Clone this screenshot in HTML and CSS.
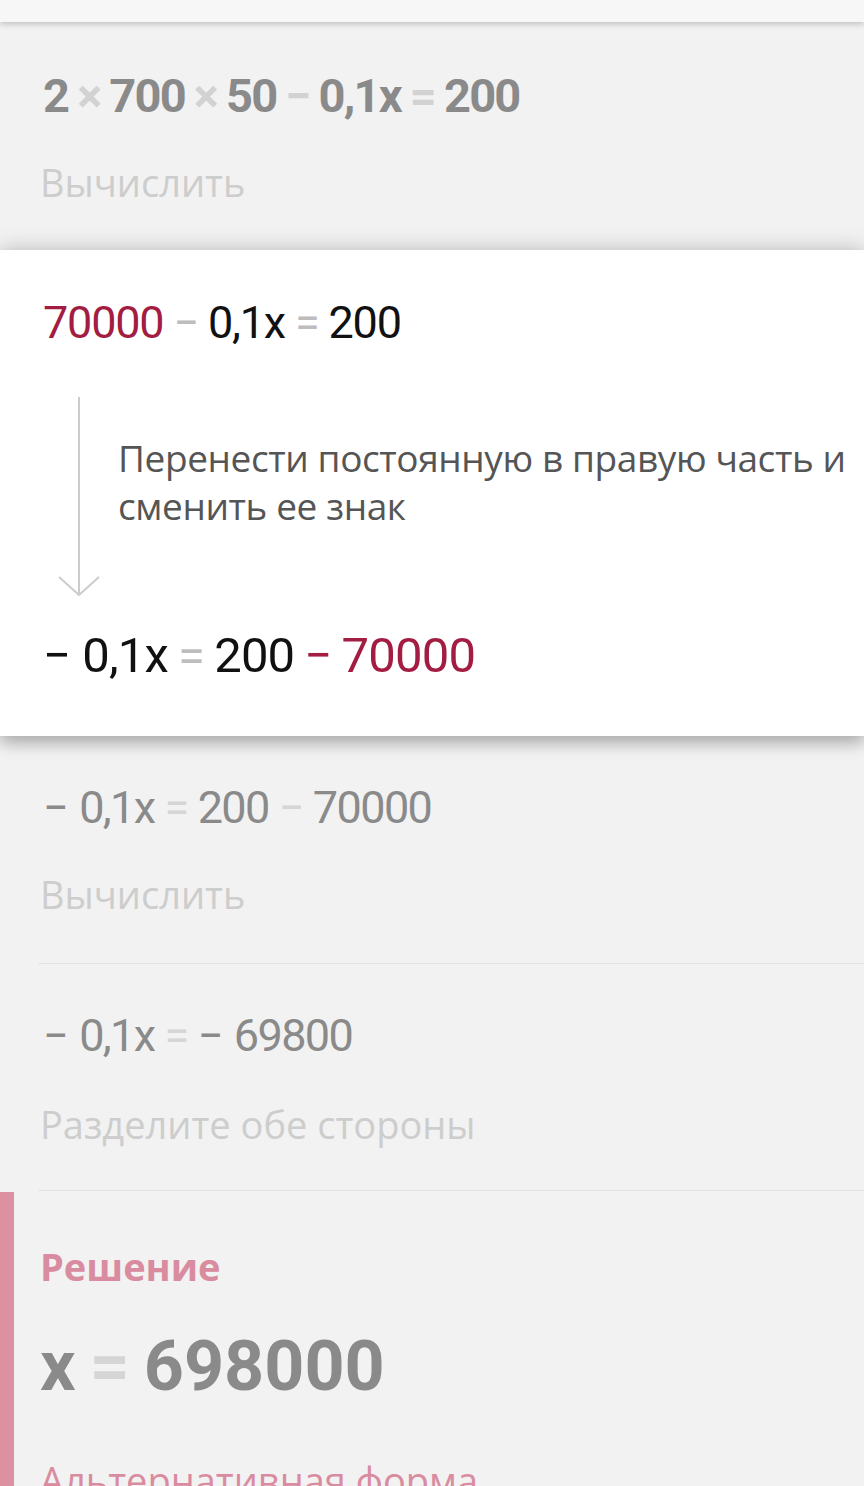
FILE: index.html
```html
<!DOCTYPE html>
<html lang="ru">
<head>
<meta charset="utf-8">
<link rel="stylesheet" href="styles.css">
</head>
<body>
<div class="topbar"></div>

<section class="step step-first">
  <div class="eq eq-bold"><span>2</span><span class="op">×</span><span>700</span><span class="op">×</span><span>50</span><span class="op">−</span><span>0,1x</span><span class="op">=</span><span>200</span></div>
  <div class="hint">Вычислить</div>
</section>

<section class="card">
  <div class="eq eq-dark"><span class="hl">70000</span><span class="op">−</span><span>0,1x</span><span class="op">=</span><span>200</span></div>
  <div class="transition">
    <svg class="arrow" width="78" height="200" viewBox="0 0 78 200">
      <path d="M39 1 V199" stroke="#cccccc" stroke-width="2" fill="none"/>
      <path d="M19 181 L39 199 L59 181" stroke="#cccccc" stroke-width="2" fill="none"/>
    </svg>
    <div class="explain">Перенести постоянную в правую часть и<br>сменить ее знак</div>
  </div>
  <div class="eq eq-dark eq-big"><span class="lead">−</span><span>0,1x</span><span class="op">=</span><span>200</span><span class="op hl">−</span><span class="hl">70000</span></div>
</section>

<section class="step step-divided">
  <div class="eq eq-gray"><span class="lead">−</span><span>0,1x</span><span class="op">=</span><span>200</span><span class="op">−</span><span>70000</span></div>
  <div class="hint">Вычислить</div>
</section>

<section class="step step-divided step-last">
  <div class="eq eq-gray"><span class="lead">−</span><span>0,1x</span><span class="op">=</span><span class="lead">−</span><span>69800</span></div>
  <div class="hint">Разделите обе стороны</div>
</section>

<section class="solution">
  <div class="sol-title">Решение</div>
  <div class="sol-eq"><span>x</span><span class="op">=</span><span>698000</span></div>
  <div class="sol-alt">Альтернативная форма</div>
</section>
</body>
</html>
```

FILE: styles.css
```css
html, body {
  margin: 0;
  padding: 0;
}
body {
  background: #f2f2f2;
  font-family: Roboto, "Liberation Sans", sans-serif;
  width: 864px;
  height: 1486px;
  overflow: hidden;
}
.topbar {
  height: 22px;
  background: #f7f7f7;
  box-shadow: 0 2px 6px rgba(0,0,0,0.22);
  position: relative;
  z-index: 2;
}
.step {
  padding-left: 40px;
}
.step-first {
  padding-top: 46px;
  padding-bottom: 44px;
}
.eq {
  white-space: nowrap;
  line-height: 56px;
  font-size: 45px;
  letter-spacing: -1.2px;
  margin-left: 3px;
}
.eq .op {
  margin: 0 10px;
}
.eq-bold {
  font-size: 47px;
  font-weight: 700;
  color: #8a8a8a;
  letter-spacing: -1.8px;
}
.eq-bold .op {
  color: #d2d2d2;
  margin: 0 9px;
}
.hint {
  font-family: "Open Sans", sans-serif;
  font-size: 38px;
  line-height: 48px;
  color: #cdcdcd;
  margin-top: 34px;
  white-space: nowrap;
}
.card {
  background: #ffffff;
  position: relative;
  z-index: 1;
  padding: 45px 0 52px 40px;
  box-shadow: 0 0 22px rgba(0,0,0,0.22), 0 8px 14px rgba(0,0,0,0.18);
  overflow: hidden;
}
.eq-dark {
  color: #111111;
}
.eq-dark .op {
  color: #bdbdbd;
}
.eq-dark .hl {
  color: #a31c42;
}
.eq .lead {
  margin-right: 12px;
}
.eq-big {
  font-size: 49px;
  letter-spacing: -0.8px;
  margin-top: 32px;
}
.transition {
  display: flex;
  margin-top: 45px;
  height: 200px;
}
.arrow {
  display: block;
  flex: none;
}
.explain {
  font-family: "Open Sans", sans-serif;
  font-size: 37px;
  letter-spacing: -0.4px;
  line-height: 48px;
  color: #555555;
  padding-top: 38px;
  white-space: nowrap;
}
.step-divided {
  margin-left: 38px;
  padding-left: 2px;
  border-bottom: 1px solid #e4e4e4;
  padding-top: 44px;
  padding-bottom: 45px;
}
.step-last .hint {
  margin-top: 36px;
}
.step-last {
  padding-bottom: 42px;
}
.eq-gray {
  color: #8a8a8a;
  letter-spacing: -1.6px;
}
.eq-gray .op {
  color: #d5d5d5;
}
.solution {
  border-left: 14px solid #dd90a2;
  margin-top: 1px;
  padding: 50px 0 0 26px;
}
.sol-title {
  font-family: "Open Sans", sans-serif;
  font-weight: 700;
  font-size: 38px;
  line-height: 48px;
  color: #d98ca0;
}
.sol-eq {
  margin-top: 36px;
  font-size: 70px;
  font-weight: 700;
  line-height: 80px;
  color: #8a8a8a;
  white-space: nowrap;
}
.sol-eq .op {
  color: #d5d5d5;
  margin: 0 14px;
}
.sol-alt {
  margin-top: 50px;
  font-family: "Open Sans", sans-serif;
  font-size: 38px;
  line-height: 48px;
  color: #d98ca0;
  white-space: nowrap;
}
```
